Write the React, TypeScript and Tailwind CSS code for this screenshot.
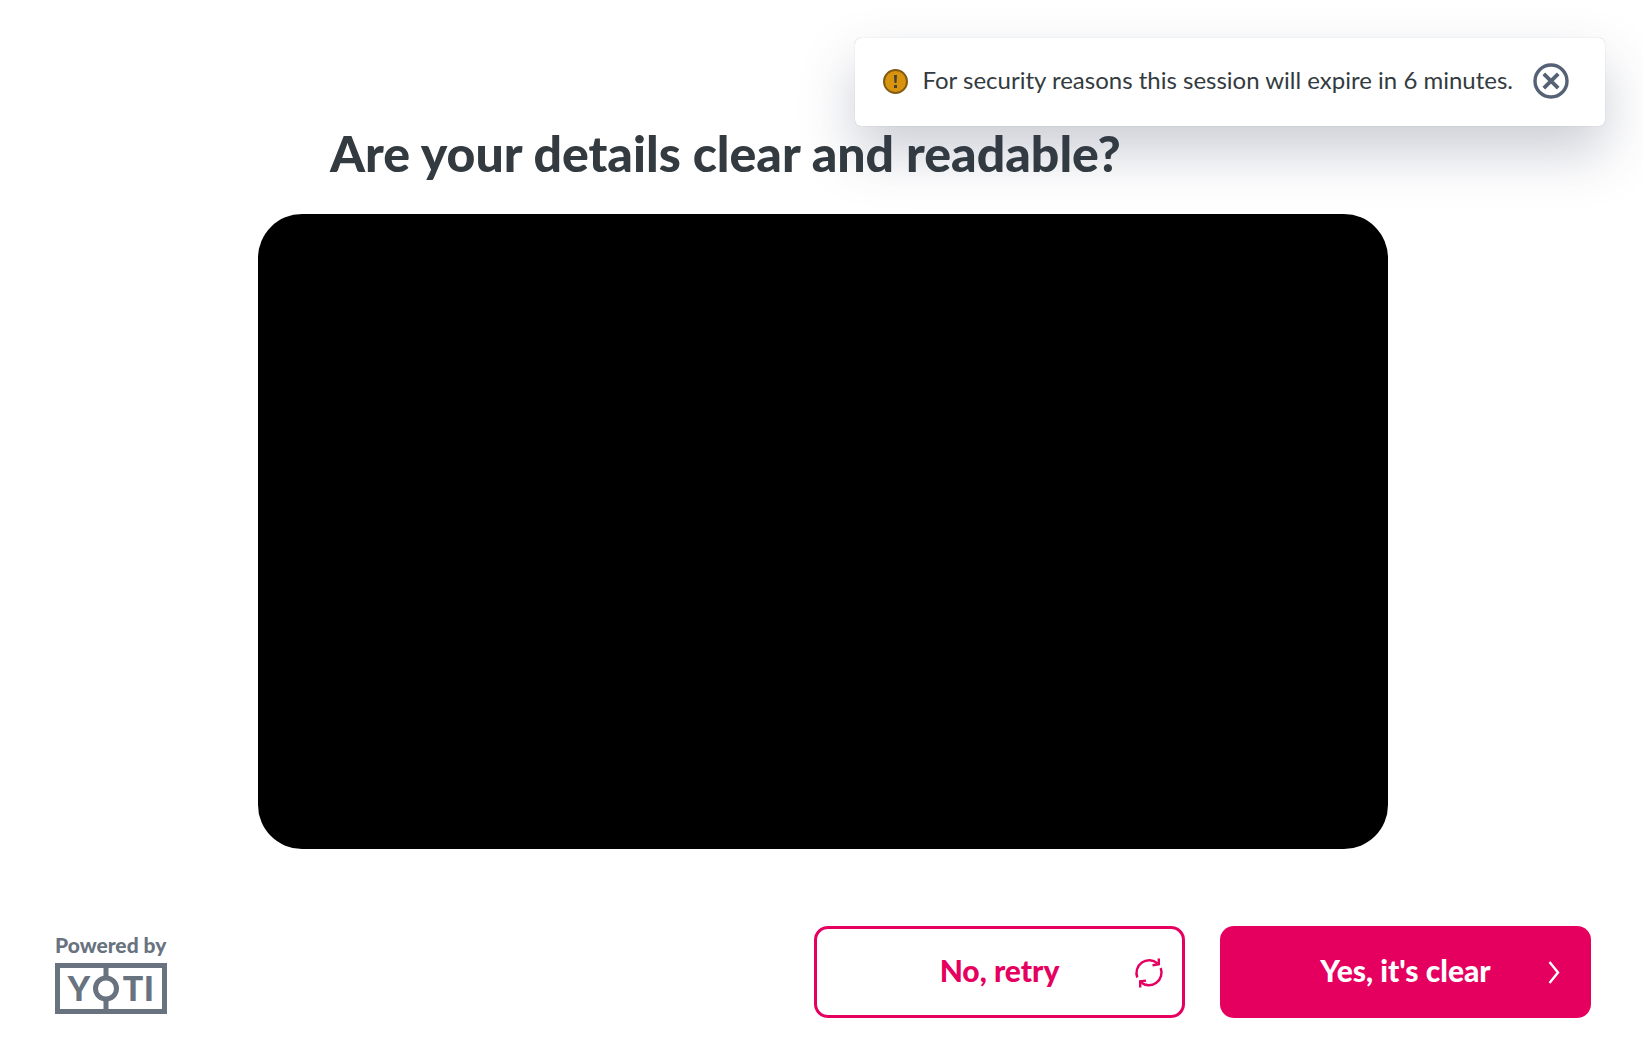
import React from 'react';

function App() {
  const [showNotice, setShowNotice] = React.useState(true);

  return (
    <div className="relative flex min-h-screen flex-col bg-white font-['Lato',sans-serif] text-[#333b40]">
      {/* Session notice */}
      {showNotice && (
        <div
          role="alert"
          className="absolute right-[38px] top-[38px] z-10 flex h-[88px] items-center rounded-md bg-white pb-0.5 pl-7 pr-9 shadow-[0_0_1px_rgba(50,60,90,0.35),0_26px_54px_rgba(50,60,93,0.25)]"
        >
          <WarningIcon />
          <p className="ml-3.5 pb-0.5 text-[24px] leading-8">For security reasons this session will expire in 6 minutes.</p>
          <button type="button" aria-label="Close" className="ml-5" onClick={() => setShowNotice(false)}>
            <CloseIcon />
          </button>
        </div>
      )}

      {/* Captured document */}
      <main className="pl-[258px] pr-[255px] pt-[125px]">
        <h1 className="pl-[72px] text-[50px] font-black leading-[56px]">Are your details clear and readable?</h1>
        <div className="mt-[33px] aspect-[1130/635] w-full rounded-[44px] bg-black" />
      </main>

      <footer className="mt-auto flex items-end justify-between pb-10 pl-[55px] pr-[52px]">
        <div className="pb-1 text-[#68737f]">
          <p className="pb-0.5 text-[21px] font-black leading-8">Powered by</p>
          <YotiLogo />
        </div>
        <div className="flex gap-[35px]">
          <button
            type="button"
            className="relative h-[92px] w-[371px] rounded-[14px] border-3 border-[#e50060] pb-1 text-[30px] font-black text-[#e50060]"
          >
            No, retry
            <RetryIcon />
          </button>
          <button
            type="button"
            className="relative h-[92px] w-[371px] rounded-[14px] bg-[#e50060] pb-1 text-[30px] font-black text-white"
          >
            Yes, it's clear
            <ChevronIcon />
          </button>
        </div>
      </footer>
    </div>
  );
}

function WarningIcon() {
  return (
    <svg className="h-[25px] w-[25px]" viewBox="0 0 25 25" fill="none">
      <circle cx="12.5" cy="12.5" r="11.5" fill="#d9940f" stroke="#845a11" strokeWidth="2" />
      <path d="M11 6h3l-.5 8h-2z" fill="#4a4030" />
      <rect x="11" y="16" width="3" height="3" fill="#4a4030" />
    </svg>
  );
}

function CloseIcon() {
  return (
    <svg className="h-9 w-9" viewBox="0 0 36 36" fill="none" stroke="#556174" strokeWidth="3.4">
      <circle cx="18" cy="18" r="16" />
      <path d="M10.800 10.800l14.400 14.400M25.200 10.800L10.800 25.200" strokeWidth="3.8" />
    </svg>
  );
}

function RetryIcon() {
  return (
    <svg className="absolute right-[17px] top-[28px] h-8 w-8" viewBox="0 0 32 32" fill="none" stroke="currentColor" strokeWidth="2.400">
      <path d="M4.300 20.500A12.700 12.700 0 0 1 24.500 6.400" />
      <path d="M27.700 11A12.700 12.700 0 0 1 8 25.500" />
      <path d="M25.800 1.500V7.300L19.500 8.200" />
      <path d="M7.200 30.500V24.300L13 23.600" />
    </svg>
  );
}

function ChevronIcon() {
  return (
    <svg className="absolute right-[31px] top-[35px] h-[23px] w-3" viewBox="0 0 12 23" fill="none" stroke="currentColor" strokeWidth="2.400">
      <path d="M1.500 1l8.500 10.500-8.500 10.500" />
    </svg>
  );
}

function YotiLogo() {
  return (
    <svg className="h-[51px] w-28" viewBox="0 0 112 51" fill="none" stroke="currentColor" strokeWidth="5" role="img" aria-label="Yoti">
      <rect x="2.500" y="2.500" width="107" height="46" />
      <path d="M51 3v11M51 37v12" />
      <circle cx="51" cy="25.500" r="10.500" />
      <g className="text-[34px] font-black" fill="currentColor" stroke="none" textAnchor="middle">
        <text x="24" y="38">Y</text>
        <text x="78" y="38">T</text>
        <text x="94" y="38">I</text>
      </g>
    </svg>
  );
}

export default App;
